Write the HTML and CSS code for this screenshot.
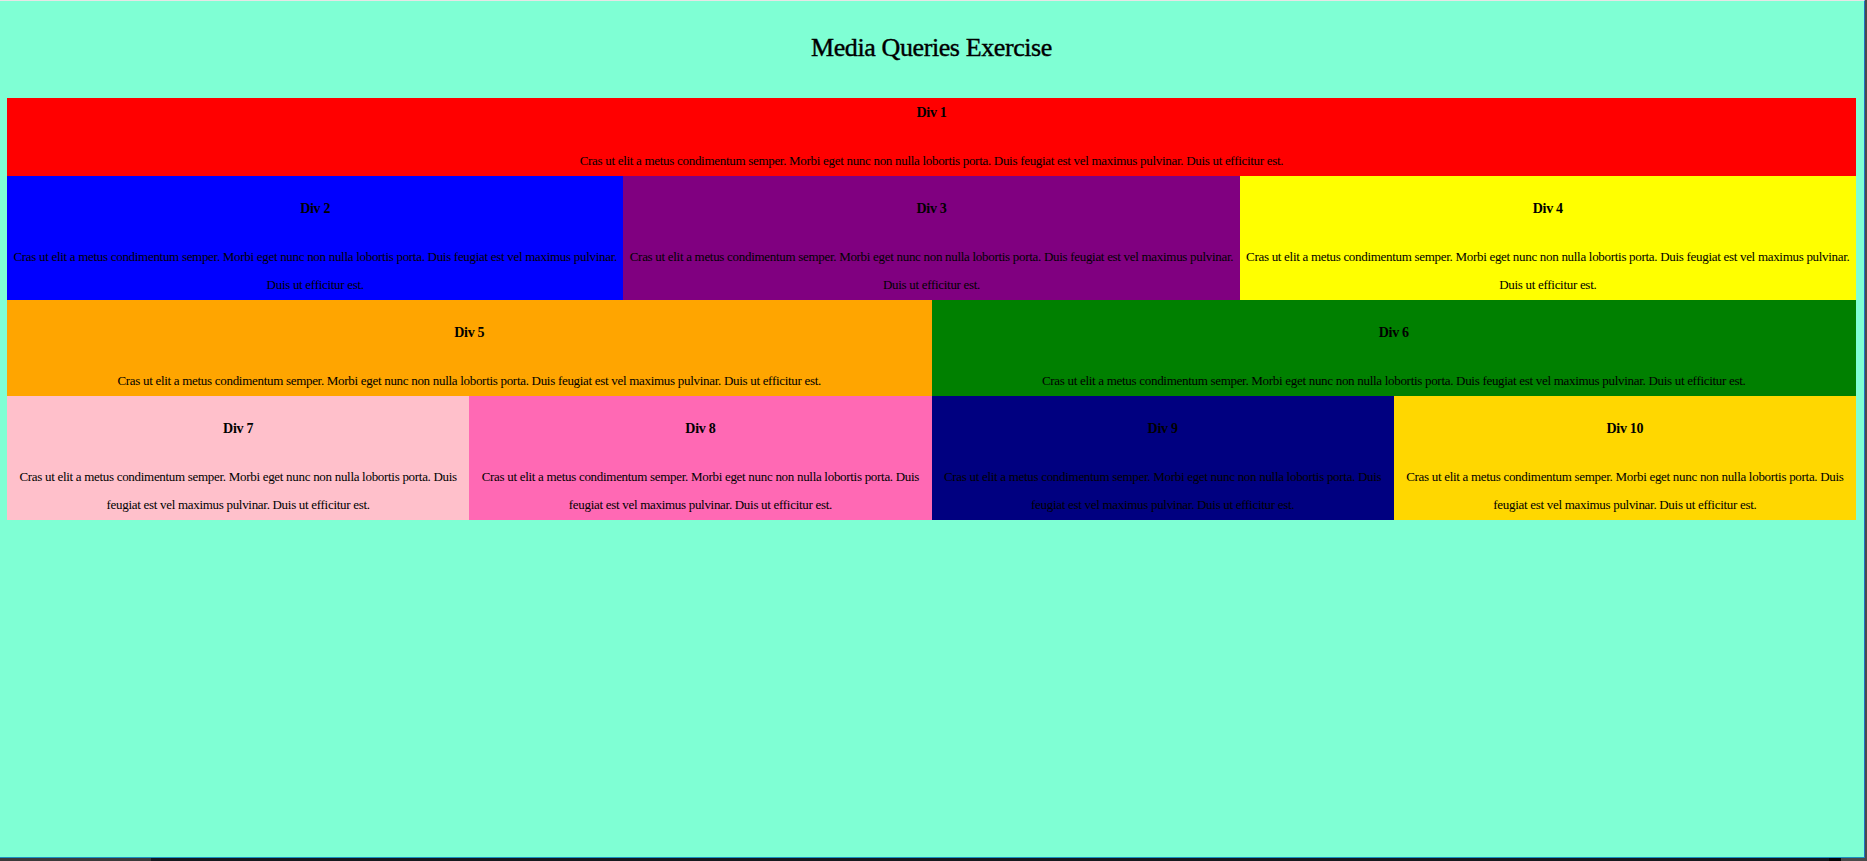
FILE: index.html
```html
<!DOCTYPE html>
<html lang="en">
<head>
    <meta charset="UTF-8">
    <meta name="viewport" content="width=device-width, initial-scale=1.0">
    <title>Media Queries Exercise</title>
    <link rel="stylesheet" href="styles.css">
</head>
<body>

    <div id="page">
        <h1>Media Queries Exercise</h1>

        <div class="row">
            <div class="box red first">
                <h3>Div 1</h3>
                <p>Cras ut elit a metus condimentum semper. Morbi eget nunc non nulla lobortis porta. Duis feugiat est vel maximus pulvinar. Duis ut efficitur est.</p>
            </div>
        </div>

        <div class="row">
            <div class="box blue">
                <h3>Div 2</h3>
                <p>Cras ut elit a metus condimentum semper. Morbi eget nunc non nulla lobortis porta. Duis feugiat est vel maximus pulvinar. Duis ut efficitur est.</p>
            </div>
            <div class="box purple">
                <h3>Div 3</h3>
                <p>Cras ut elit a metus condimentum semper. Morbi eget nunc non nulla lobortis porta. Duis feugiat est vel maximus pulvinar. Duis ut efficitur est.</p>
            </div>
            <div class="box yellow">
                <h3>Div 4</h3>
                <p>Cras ut elit a metus condimentum semper. Morbi eget nunc non nulla lobortis porta. Duis feugiat est vel maximus pulvinar. Duis ut efficitur est.</p>
            </div>
        </div>

        <div class="row">
            <div class="box orange">
                <h3>Div 5</h3>
                <p>Cras ut elit a metus condimentum semper. Morbi eget nunc non nulla lobortis porta. Duis feugiat est vel maximus pulvinar. Duis ut efficitur est.</p>
            </div>
            <div class="box green">
                <h3>Div 6</h3>
                <p>Cras ut elit a metus condimentum semper. Morbi eget nunc non nulla lobortis porta. Duis feugiat est vel maximus pulvinar. Duis ut efficitur est.</p>
            </div>
        </div>

        <div class="row">
            <div class="box pink">
                <h3>Div 7</h3>
                <p>Cras ut elit a metus condimentum semper. Morbi eget nunc non nulla lobortis porta. Duis feugiat est vel maximus pulvinar. Duis ut efficitur est.</p>
            </div>
            <div class="box hotpink">
                <h3>Div 8</h3>
                <p>Cras ut elit a metus condimentum semper. Morbi eget nunc non nulla lobortis porta. Duis feugiat est vel maximus pulvinar. Duis ut efficitur est.</p>
            </div>
            <div class="box navy">
                <h3>Div 9</h3>
                <p>Cras ut elit a metus condimentum semper. Morbi eget nunc non nulla lobortis porta. Duis feugiat est vel maximus pulvinar. Duis ut efficitur est.</p>
            </div>
            <div class="box gold">
                <h3>Div 10</h3>
                <p>Cras ut elit a metus condimentum semper. Morbi eget nunc non nulla lobortis porta. Duis feugiat est vel maximus pulvinar. Duis ut efficitur est.</p>
            </div>
        </div>
    </div>

    <!-- Sliver of the desktop taskbar under the window -->
    <div id="taskbar">
        <div class="task-start"></div>
        <div class="task-middle"></div>
        <div class="task-black"></div>
        <div class="task-tray"></div>
    </div>

</body>
</html>
```

FILE: styles.css
```css
/* General styling */
html, body {
    height: 100%;
}

body {
    margin: 0;
    background-color: #4a4a4a;
    overflow: hidden;
}

#page {
    box-sizing: border-box;
    width: 1865px;
    height: 858px;
    padding: 0 8px 0 7px;
    background-color: aquamarine;
    border-top: 1px solid #e6e6e6;
    border-right: 1px solid #1f6fc4;
    border-bottom: 1px solid #1a8fc0;
    font-family: "Liberation Serif", serif;
    color: #000;
    text-align: center;
}

h1 {
    margin: 0;
    height: 97px;
    padding-top: 30px;
    box-sizing: border-box;
    font-size: 26px;
    line-height: 34px;
    font-weight: normal;
    letter-spacing: -0.4px;
    -webkit-text-stroke: 0.4px #000;
}

/* Rows of boxes */
.row {
    display: flex;
}

.box {
    flex: 1 1 0;
    padding-top: 18.25px;
}

.box.first {
    padding-top: 0;
}

h3 {
    margin: 0;
    height: 49px;
    font-size: 14px;
    line-height: 30px;
    font-weight: bold;
    letter-spacing: -0.3px;
}

p {
    margin: 0;
    padding-bottom: 1.5px;
    font-size: 13px;
    line-height: 27.5px;
    letter-spacing: -0.3px;
}

.red { background-color: red; }
.blue { background-color: blue; }
.purple { background-color: purple; }
.yellow { background-color: yellow; }
.orange { background-color: orange; }
.green { background-color: green; }
.pink { background-color: pink; }
.hotpink { background-color: hotpink; }
.navy { background-color: navy; }
.gold { background-color: gold; }

/* Taskbar */
#taskbar {
    display: flex;
    height: 3px;
}

.task-start {
    width: 151px;
    background-color: #3a3a3a;
}

.task-middle {
    flex: 1;
    background-color: #15191e;
}

.task-black {
    width: 12px;
    background-color: #050505;
}

.task-tray {
    width: 26px;
    background-color: #4a4a4a;
}
```
